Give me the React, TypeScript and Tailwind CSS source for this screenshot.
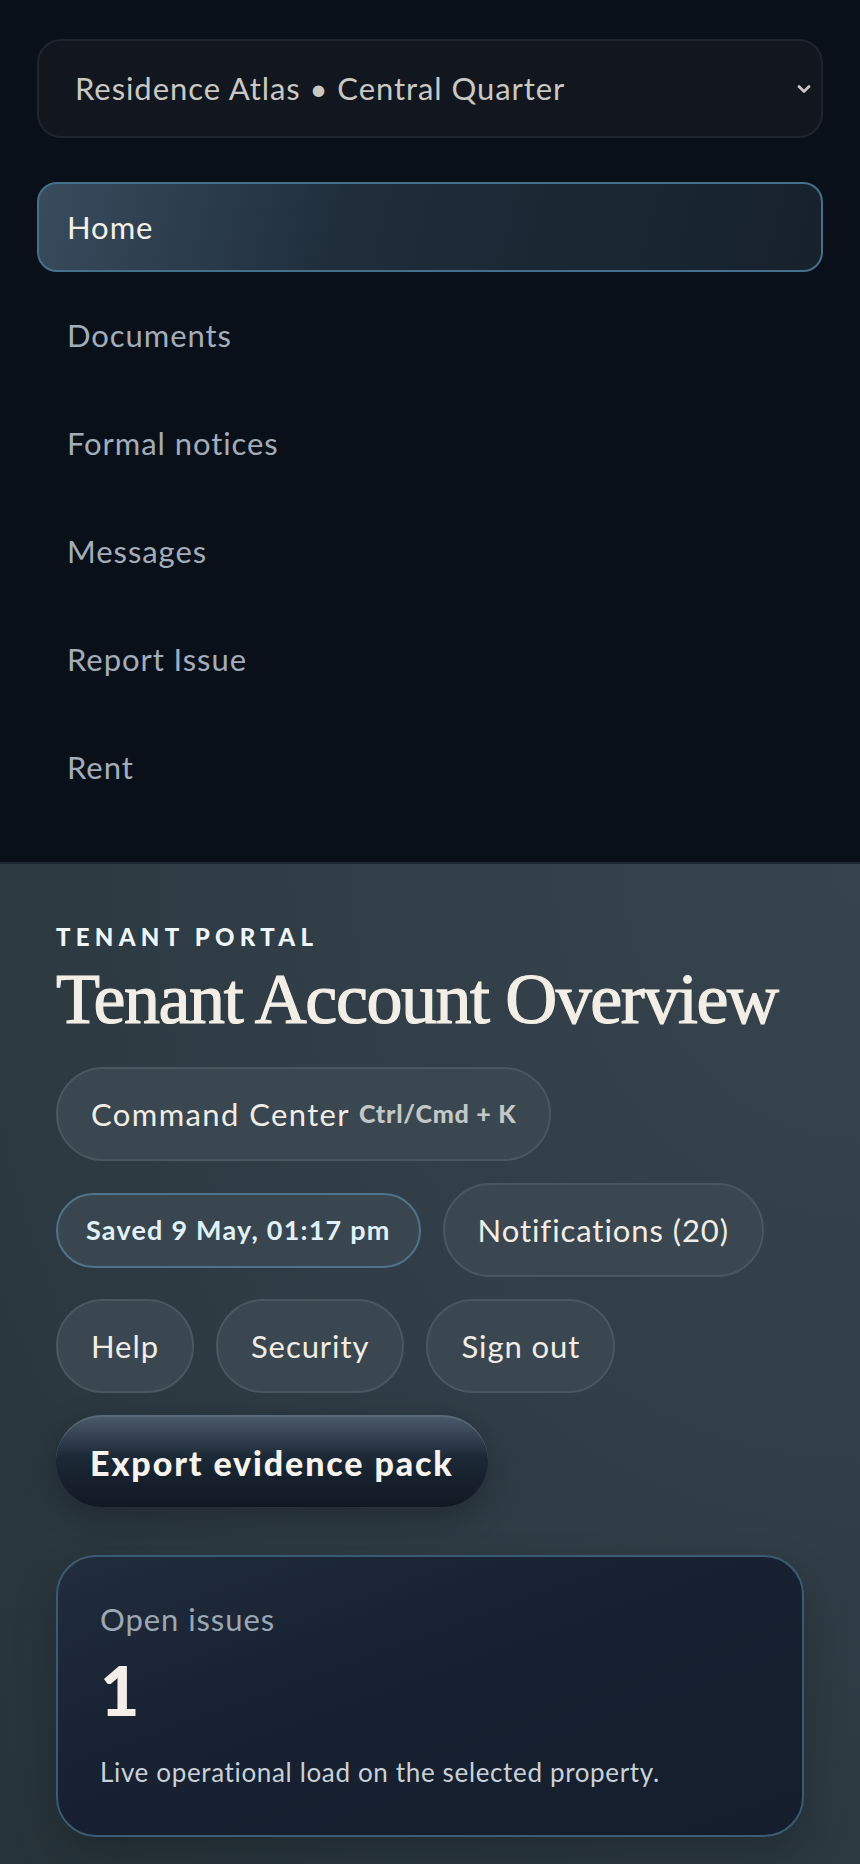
import React from "react";

const NAV = ["Documents", "Formal notices", "Messages", "Report Issue", "Rent"];

function Pill({ children, className = "" }: { children: React.ReactNode; className?: string }) {
  return (
    <button
      type="button"
      className={`flex h-[94px] items-center rounded-full border-2 border-[#4a575f] bg-[#3a4750] px-[33px] text-[31px] tracking-[0.03em] text-[#f1ede6] ${className}`}
    >
      {children}
    </button>
  );
}

export default function App() {
  return (
    <div className="min-h-[1864px] bg-[#28343c] font-['Lato','Noto_Sans',sans-serif]">
      <nav className="bg-[#0a1019] px-[37px] pb-[50px] pt-[39px]">
        <div className="flex h-[99px] items-center justify-between rounded-[24px] border-2 border-[#1e2530] bg-[#11161f] pl-[36px] pr-[8px]">
          <span className="text-[31px] tracking-[0.03em] text-[#c9c8c3]">Residence Atlas • Central Quarter</span>
          <svg width="18" height="14" viewBox="0 0 18 14" className="text-[#c9c8c3]">
            <path d="M4 4.5 9 9.5 14 4.5" fill="none" stroke="currentColor" strokeWidth="2.8" strokeLinecap="round" strokeLinejoin="round" />
          </svg>
        </div>

        <ul className="mt-[44px] flex flex-col gap-[18px]">
          <li className="flex h-[90px] items-center rounded-[20px] border-2 border-[#44708c] bg-[linear-gradient(105deg,#384c5e_0%,#1f2d3a_40%,#16212c_100%)] px-[28px] text-[31px] tracking-[0.03em] text-[#f4f0e8]">
            Home
          </li>
          {NAV.map((n) => (
            <li key={n} className="flex h-[90px] items-center px-[30px] text-[31px] tracking-[0.03em] text-[#a3adba]">
              {n}
            </li>
          ))}
        </ul>
      </nav>

      <main className="min-h-[1002px] border-t-2 border-[#1c2833] bg-[radial-gradient(ellipse_at_top_right,#37444d_0%,#313e47_45%,#27333a_100%)] px-[56px] pb-[30px] pt-[58px]">
        <p className="text-[24px] font-black leading-[30px] tracking-[0.22em] text-[#eef6fb]">TENANT PORTAL</p>
        <h1 className="mt-[7px] font-['Liberation_Serif','DejaVu_Serif',serif] text-[72px] leading-[80px] tracking-[-0.02em] text-[#f3efe6] [-webkit-text-stroke:1.2px_#f3efe6]">
          Tenant Account Overview
        </h1>

        <div className="mt-[28px] flex flex-col items-start gap-[22px]">
          <Pill>
            <span className="tracking-[0.045em]">Command Center</span>
            <span className="ml-[9px] text-[25px] font-black tracking-[0.03em] text-[#c4c7c7]">Ctrl/Cmd + K</span>
          </Pill>

          <div className="flex items-center gap-[22px]">
            <span className="flex h-[75px] items-center rounded-full border-2 border-[#4f738d] bg-[#39464f] px-[28px] text-[27px] font-bold tracking-[0.045em] text-[#e0f1fb]">
              Saved 9 May, 01:17 pm
            </span>
            <Pill>Notifications (20)</Pill>
          </div>

          <div className="flex items-center gap-[22px]">
            <Pill>Help</Pill>
            <Pill>Security</Pill>
            <Pill>Sign out</Pill>
          </div>

          <button
            type="button"
            className="flex h-[92px] items-center rounded-full border-t-2 border-[#5a6a78] bg-[linear-gradient(180deg,#4a5968_0%,#1c2836_45%,#111822_100%)] px-[34px] text-[34px] font-black tracking-[0.055em] text-[#f7f3ee] shadow-[0_10px_30px_rgba(10,15,22,0.35)]"
          >
            Export evidence pack
          </button>
        </div>

        <section className="mt-[48px] rounded-[40px] border-2 border-[#3c5a74] bg-[linear-gradient(160deg,#212c3c_0%,#172131_40%,#151e2c_100%)] px-[42px] pb-[46px] pt-[44px] shadow-[0_20px_40px_rgba(10,15,22,0.3)]">
          <p className="text-[31px] leading-[36px] tracking-[0.03em] text-[#9ba7b3]">Open issues</p>
          <p className="mt-[17px] text-[68px] font-black leading-[72px] text-[#f3efe8]">1</p>
          <p className="mt-[29px] text-[26px] leading-[34px] tracking-[0.025em] text-[#c9d1d9]">
            Live operational load on the selected property.
          </p>
        </section>
      </main>
    </div>
  );
}
